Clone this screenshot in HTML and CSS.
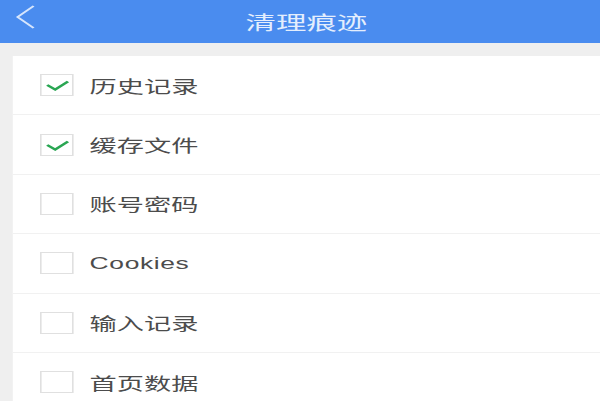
FILE: index.html
```
<!DOCTYPE html>
<html lang="zh-CN">
<head>
	<meta charset="UTF-8">
	<title>清理痕迹</title>
	<link rel="stylesheet" href="styles.css">
</head>
<body>
	<div class="screen">
		<div class="topbar">
			<svg class="back" width="14" height="24" viewBox="0 0 14 24">
				<path d="M12 1 L2 12 L12 23" fill="none" stroke="#d6e5fc" stroke-width="1.6"/>
			</svg>
			<div class="title">清理痕迹</div>
		</div>
		<div class="card">
			<div class="row">
				<span class="box on"><svg width="16" height="12" viewBox="0 0 16 12"><path d="M1.5 6 L6.5 10.5 L14.5 2.5" fill="none" stroke="#2aa653" stroke-width="2"/></svg></span>
				<span class="label">历史记录</span>
			</div>
			<div class="row">
				<span class="box on"><svg width="16" height="12" viewBox="0 0 16 12"><path d="M1.5 6 L6.5 10.5 L14.5 2.5" fill="none" stroke="#2aa653" stroke-width="2"/></svg></span>
				<span class="label">缓存文件</span>
			</div>
			<div class="row">
				<span class="box"></span>
				<span class="label">账号密码</span>
			</div>
			<div class="row">
				<span class="box"></span>
				<span class="label en">Cookies</span>
			</div>
			<div class="row">
				<span class="box"></span>
				<span class="label">输入记录</span>
			</div>
			<div class="row">
				<span class="box"></span>
				<span class="label">首页数据</span>
			</div>
		</div>
	</div>
</body>
</html>
```

FILE: styles.css
```
body{
	margin: 0;
	background: #efefef;
	overflow: hidden;
	font-family: "Noto Sans CJK SC", "Noto Sans", sans-serif;
}
/* screenshot is stretched sideways, so lay out at 375 and widen */
.screen{
	width: 375px;
	height: 401px;
	transform: scaleX(1.6);
	transform-origin: 0 0;
	background: #efefef;
}
.topbar{
	position: relative;
	height: 43px;
	background: #4a8cef;
	display: flex;
	align-items: center;
	justify-content: center;
}
.back{
	position: absolute;
	left: 9px;
	top: 5px;
}
.title{
	color: #e4eefd;
	font-size: 19px;
	margin-left: 8px;
}
.card{
	margin: 13px 0 0 8px;
	background: #fff;
}
.row{
	height: 59.4px;
	box-sizing: border-box;
	border-bottom: 1px solid #f1f1f1;
	display: flex;
	align-items: center;
	padding-left: 17px;
}
.box{
	width: 21px;
	height: 22px;
	box-sizing: border-box;
	border: 1px solid #e0e0e0;
	display: flex;
	align-items: center;
	justify-content: center;
	margin-right: 10px;
}
.label{
	font-size: 17px;
	color: #4c4c4c;
}
.label.en{
	font-family: "Liberation Sans", Arial, sans-serif;
	font-size: 16.5px;
	letter-spacing: 0.4px;
}
```
